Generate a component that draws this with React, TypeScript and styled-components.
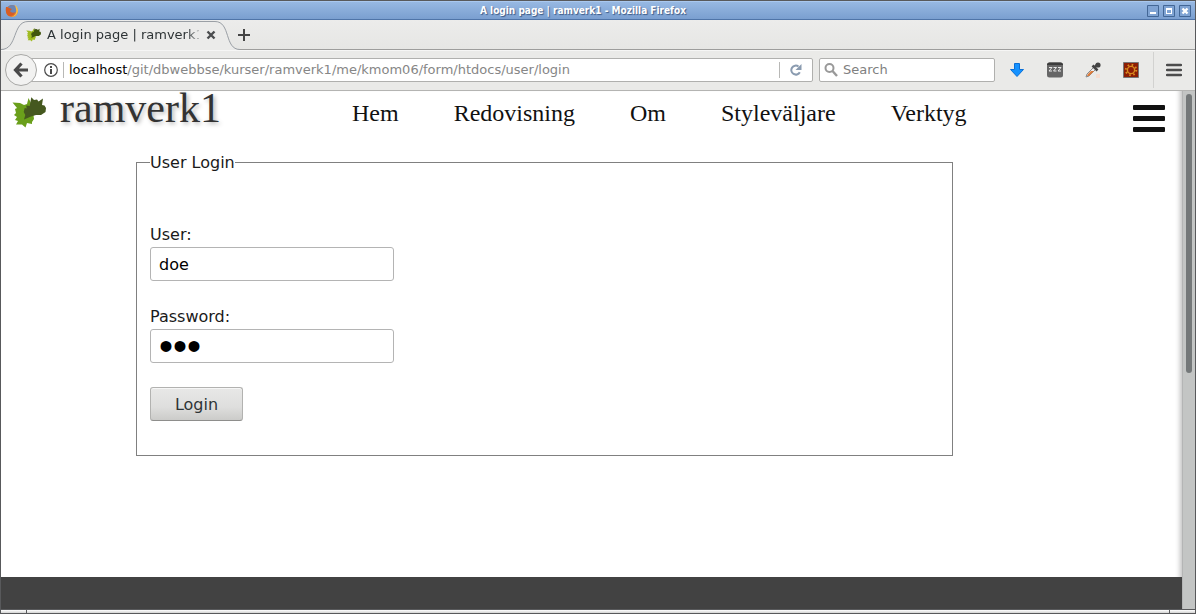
import React from "react";
import styled, { createGlobalStyle, css } from "styled-components";

const GlobalStyle = createGlobalStyle`
  *, *::before, *::after { box-sizing: border-box; }
  body { margin: 0; background: #e8e8e7; }
  button { margin: 0; padding: 0; border: 0; background: none; font: inherit; color: inherit; }
  svg { display: block; }
`;

const chromeFont = css`
  font-family: "DejaVu Sans", sans-serif;
  font-size: 13px;
  line-height: 20px;
`;

const Window = styled.div`
  display: flex;
  flex-direction: column;
  min-height: 100vh;
  border: 1px solid #58595b;
  background: #e8e8e7;
`;

const TitleBar = styled.div`
  display: grid;
  grid-template-columns: 30px 1fr 60px;
  align-items: center;
  height: 19px;
  padding: 0 4px;
  border-top: 1px solid #a9c8ef;
  border-bottom: 1px solid #4f74a8;
  background: linear-gradient(#97b8e2, #7a9fd0);
`;

const WindowTitle = styled.div`
  font-family: "DejaVu Sans Condensed", "DejaVu Sans", sans-serif;
  font-size: 10px;
  line-height: 16px;
  font-weight: bold;
  text-align: center;
  color: #fff;
  text-shadow: 1px 1px 1px #3c5a86;
`;

const WindowButtons = styled.div`
  display: flex;
  justify-content: flex-end;
  gap: 4px;
`;

const WindowButton = styled.button`
  width: 12px;
  height: 12px;
`;

const TabBar = styled.div`
  display: flex;
  height: 30px;
  border-bottom: 1px solid #9d9d9c;
  background: linear-gradient(#ececeb, #e6e6e4);
`;

const Tab = styled.div`
  position: relative;
  display: flex;
  align-items: center;
  width: 231px;
  height: 30px;
  padding-left: 25px;
`;

const TabShape = styled.svg`
  position: absolute;
  left: 0;
  top: 0;
`;

const TabTitle = styled.a`
  ${chromeFont}
  position: relative;
  width: 152px;
  margin-left: 6px;
  overflow: hidden;
  white-space: nowrap;
  text-decoration: none;
  color: #2e3436;
  mask-image: linear-gradient(90deg, #000 140px, transparent 156px);
`;

const TabIcon = styled.span`
  position: relative;
  flex: none;
`;

const IconButton = styled.button<{ $wide?: boolean }>`
  position: relative;
  display: flex;
  align-items: center;
  justify-content: center;
  flex: none;
  width: ${(p) => (p.$wide ? 32 : 24)}px;
  height: 30px;
`;

const NavBar = styled.div`
  display: flex;
  align-items: center;
  height: 41px;
  padding: 0 13px 2px 4px;
  border-top: 1px solid #f6f6f5;
  border-bottom: 1px solid #b4b4b2;
  background: #eaeae8;
`;

const BackButton = styled.button`
  z-index: 1;
  display: flex;
  align-items: center;
  justify-content: center;
  flex: none;
  width: 32px;
  height: 32px;
  border: 1px solid #a8a8a6;
  border-radius: 50%;
  background: #f2f2f1;
`;

const UrlBar = styled.div`
  display: flex;
  align-items: center;
  flex: 1;
  min-width: 0;
  height: 24px;
  margin-left: -7px;
  padding-left: 8px;
  border: 1px solid #b0b0ae;
  border-radius: 2px;
  background: #fff;
`;

const Divider = styled.span<{ $tall?: boolean }>`
  flex: none;
  width: 1px;
  height: ${(p) => (p.$tall ? 36 : 16)}px;
  background: ${(p) => (p.$tall ? "#d2d2d0" : "#b8b8b6")};
`;

const Url = styled.div`
  ${chromeFont}
  flex: 1;
  min-width: 0;
  overflow: hidden;
  white-space: nowrap;
  padding-left: 5px;
  color: #868686;
`;

const Host = styled.span`
  color: #000;
`;

const SearchBar = styled.label`
  display: flex;
  align-items: center;
  gap: 5px;
  width: 176px;
  height: 24px;
  margin-left: 6px;
  padding-left: 4px;
  border: 1px solid #b0b0ae;
  border-radius: 2px;
  background: #fff;
`;

const SearchInput = styled.input`
  ${chromeFont}
  flex: 1;
  min-width: 0;
  padding: 0;
  border: 0;
  outline: 0;
  background: none;
  &::placeholder { color: #808080; opacity: 1; }
`;

const Tools = styled.div<{ $tight?: boolean }>`
  display: flex;
  align-items: center;
  gap: ${(p) => (p.$tight ? 12 : 14)}px;
  margin-left: 10px;
`;

const Viewport = styled.div`
  display: flex;
  flex: 1;
`;

const Page = styled.div`
  display: flex;
  flex-direction: column;
  flex: 1;
  min-width: 0;
  background: #fff;
  box-shadow: inset -6px 0 5px -4px #00000040;
`;

const SiteHeader = styled.header`
  display: flex;
  align-items: flex-start;
  height: 50px;
  padding: 0 17px 0 11px;
`;

const Brand = styled.a`
  display: flex;
  align-items: flex-start;
  width: 340px;
  gap: 14px;
  text-decoration: none;
  color: #333;
  font-family: "Liberation Serif", serif;
  font-size: 42px;
  line-height: 34px;
  text-shadow: 2px 2px 4px #00000048;
`;

const BrandMark = styled.span`
  padding-top: 6px;
`;

const SiteNav = styled.nav`
  display: flex;
  flex: 1;
  gap: 55px;
`;

const NavLink = styled.a`
  font-family: "Liberation Serif", serif;
  font-size: 24px;
  line-height: 44px;
  text-decoration: none;
  color: #111;
`;

const MenuButton = styled.button`
  display: flex;
  flex-direction: column;
  gap: 6px;
  width: 32px;
  margin-top: 14px;
`;

const MenuBar = styled.span`
  width: 32px;
  height: 5px;
  border-radius: 1px;
  background: #111;
`;

const LoginForm = styled.form`
  flex: 1;
  margin: 11px 229px 0 135px;
  font-family: "DejaVu Sans", sans-serif;
  font-size: 16px;
  color: #1a1a1a;
`;

const Fieldset = styled.fieldset`
  display: flex;
  flex-direction: column;
  align-items: flex-start;
  gap: 24px;
  margin: 0;
  padding: 51px 13px 34px;
  border: 1px solid #808080;
`;

const Legend = styled.legend`
  padding: 2px 0 0;
  line-height: 18px;
`;

const Field = styled.label`
  display: flex;
  flex-direction: column;
  line-height: 24px;
`;

const TextInput = styled.input`
  width: 244px;
  height: 34px;
  padding: 0 8px;
  border: 1px solid #b4b4b4;
  border-radius: 3px;
  outline: 0;
  background: #fff;
  font-family: "DejaVu Sans", sans-serif;
  font-size: 16px;
  color: #000;
  &[type="password"] {
    font-family: "Liberation Sans", sans-serif;
    font-size: 40px;
  }
`;

const SubmitButton = styled.button`
  width: 93px;
  height: 34px;
  border: 1px solid #b2b2b0;
  border-bottom-color: #8e8e8c;
  border-radius: 3px;
  background: linear-gradient(#e8e8e7, #dededd 60%, #cbcbc9);
  box-shadow: inset 0 1px #f6f6f6;
  color: #2e3436;
`;

const SiteFooter = styled.footer`
  height: 32px;
  background: #424242;
`;

const ScrollTrack = styled.div`
  width: 13px;
  padding: 3px 3px 0;
  background: #c3c5c4;
  border-left: 1px solid #b4b5b5;
`;

const ScrollThumb = styled.div`
  width: 6px;
  height: 279px;
  border-radius: 3px;
  background: #747879;
`;

const ResizeBar = styled.div`
  display: grid;
  grid-template-columns: 25px 1fr 25px;
  gap: 1px;
  height: 4px;
  border-top: 1px solid #58595b;
  background: #58595b;
`;

const ResizeGrip = styled.span`
  background: linear-gradient(#fff, #d4d4d3);
`;

const Leaf = ({ size, light, dark }: { size: number; light: string; dark: string }) => (
  <svg width={size} height={size} viewBox="0 0 34 34">
    <path
      fill={light}
      d="M.5 5.500L8 6l4 2 3-1 1.500-6L20 8l2 14-2 3v2l-5-1-1.500 4.500L10 27.500H4L6 24l-3-1 2-3-3-2 2-2-1-4 2-1z"
    />
    <path
      fill={dark}
      d="M19.300.3L22 3l3-.5 1.500 2 4.500-3-1 6.500 2.500.5L34 11l-.5 4-4.500 3h-5l-5 1.500-7 3 1.300-4.500-1.600-3 1-4 2 .5-.5-3 3.500.5z"
    />
  </svg>
);

const navItems = ["Hem", "Redovisning", "Om", "Styleväljare", "Verktyg"];

export default function App() {
  return (
    <Window>
      <GlobalStyle />
      <TitleBar>
        <svg width="14" height="14" viewBox="0 0 14 14">
          <circle cx="7" cy="7" r="6" fill="#e5752a" />
          <circle cx="7" cy="5.500" r="4.500" fill="#6c86b5" />
          <path fill="#d85d24" d="M1 3c1 0 2 0 3 1l3 1-2 2c1 2 4 2 5 1-1 3-3 4-5 4C2 12 0 8 1 3z" />
          <path fill="#f7c04a" d="M10 1c3 2 4 6 2 9-1 2-3 3-6 3 4-1 6-4 5-8z" />
        </svg>
        <WindowTitle>A login page | ramverk1 - Mozilla Firefox</WindowTitle>
        <WindowButtons>
          {["Minimize", "Maximize", "Close"].map((name) => (
            <WindowButton key={name} type="button" aria-label={name}>
              <svg width="12" height="12" viewBox="0 0 12 12">
                <path d="M.5.5h11v11H.5z" fill="#7fa3d3" stroke="#436796" />
                {name === "Minimize" && <path d="M3 7h6v2H3z" fill="#fff" />}
                {name === "Maximize" && <path d="M3 3h6v6H3zM4 5v3h4V5z" fill="#fff" fillRule="evenodd" />}
                {name === "Close" && <path d="M3.500 3.500l5 5m0-5l-5 5" stroke="#fff" strokeWidth="2.400" />}
              </svg>
            </WindowButton>
          ))}
        </WindowButtons>
      </TitleBar>

      <TabBar>
        <Tab>
          <TabShape width="240" height="30" viewBox="0 0 240 30">
            <path d="M0 30v-.5C17 29.500 11 1.500 27 1.500H214C230 1.500 223 29.500 239 29.500V30z" fill="#ebebea" />
            <path d="M0 29.500C17 29.500 11 1.500 27 1.500H214C230 1.500 223 29.500 239 29.500" fill="none" stroke="#9a9fa5" />
          </TabShape>
          <TabIcon><Leaf size={15} light="#a0bb22" dark="#42560f" /></TabIcon>
          <TabTitle href="#">A login page | ramverk1</TabTitle>
          <IconButton type="button" aria-label="Close tab">
            <svg width="10" height="10" viewBox="0 0 10 10">
              <path d="M1.500 1.500l7 7m0-7l-7 7" stroke="#4b4d4f" strokeWidth="2.400" />
            </svg>
          </IconButton>
        </Tab>
        <IconButton type="button" aria-label="New tab">
          <svg width="12" height="12" viewBox="0 0 12 12">
            <path d="M6 0v12M0 6h12" stroke="#444" strokeWidth="2" />
          </svg>
        </IconButton>
      </TabBar>

      <NavBar>
        <BackButton type="button" aria-label="Back">
          <svg width="16" height="16" viewBox="0 0 16 16">
            <path d="M8.500 1.500L2.500 8l6 6.500M3 8h12" fill="none" stroke="#4a4a4a" strokeWidth="3.200" />
          </svg>
        </BackButton>
        <UrlBar>
          <IconButton type="button" aria-label="Site information">
            <svg width="14" height="14" viewBox="0 0 14 14">
              <circle cx="7" cy="7" r="6.300" fill="none" stroke="#4a4a4a" strokeWidth="1.200" />
              <path d="M6 3h2v2H6zM6 6h2v5H6z" fill="#4a4a4a" />
            </svg>
          </IconButton>
          <Divider />
          <Url><Host>localhost</Host>/git/dbwebbse/kurser/ramverk1/me/kmom06/form/htdocs/user/login</Url>
          <Divider />
          <IconButton type="button" aria-label="Reload" $wide>
            <svg width="12" height="12" viewBox="0 0 12 12">
              <path d="M9.800 8.200A4.500 4.500 0 1 1 8.500 2.500" fill="none" stroke="#8a9bb0" strokeWidth="2" />
              <path d="M11.500 0v6h-6z" fill="#8a9bb0" />
            </svg>
          </IconButton>
        </UrlBar>
        <SearchBar>
          <svg width="14" height="14" viewBox="0 0 14 14">
            <circle cx="5.500" cy="5" r="4" fill="none" stroke="#999" strokeWidth="2" />
            <path d="M8.500 8l4.500 5" stroke="#999" strokeWidth="2.400" />
          </svg>
          <SearchInput type="search" placeholder="Search" aria-label="Search" />
        </SearchBar>
        <Tools>
          <IconButton type="button" aria-label="Downloads">
            <svg width="14" height="14" viewBox="0 0 14 14">
              <path d="M4.500.5h5v6h4L7 13.500.5 6.500h4z" fill="#1592ff" stroke="#0a6fd6" />
            </svg>
          </IconButton>
          <IconButton type="button" aria-label="Suspend tab">
            <svg width="16" height="16" viewBox="0 0 16 16">
              <rect width="16" height="15" y=".5" rx="2.500" fill="#666" />
              <path d="M0 3a2.500 2.500 0 0 1 2.500-2.500h11A2.500 2.500 0 0 1 16 3z" fill="#3c3c3c" />
              <path d="M2 5.500h3l-3 3.500h3M6.500 5.500h3L6.500 9h3M11 5.500h3L11 9h3" fill="none" stroke="#e8e8e8" />
            </svg>
          </IconButton>
          <IconButton type="button" aria-label="Color picker">
            <svg width="16" height="16" viewBox="0 0 16 16">
              <path d="M11 12h4v4h-4z" fill="#f6ddd0" />
              <path d="M1 15l1-3 7-7 2 2-7 7z" fill="#eee" stroke="#8b8b8b" />
              <path d="M2 14l1-2 3-3h3l-5 5z" fill="#df7b38" />
              <path d="M7.500 3.500l5 5M10 5l3-3" stroke="#444" strokeWidth="2.600" />
              <circle cx="13" cy="3" r="2.600" fill="#444" />
            </svg>
          </IconButton>
          <IconButton type="button" aria-label="Developer tools">
            <svg width="16" height="16" viewBox="0 0 16 16">
              <path d="M.5.5h15v15H.5z" fill="#8c1d04" stroke="#777" />
              <circle cx="8" cy="8" r="3.600" fill="none" stroke="#d98a1f" strokeWidth="1.400" />
              <circle cx="8" cy="8" r="5.200" fill="none" stroke="#d98a1f" strokeWidth="2" strokeDasharray="1.600 2.484" />
            </svg>
          </IconButton>
        </Tools>
        <Tools $tight>
          <Divider $tall />
          <svg width="16" height="14" viewBox="0 0 16 14">
            <path d="M1 2h14M1 7h14M1 12h14" stroke="#4c4c4c" strokeWidth="2.400" strokeLinecap="round" />
          </svg>
        </Tools>
      </NavBar>

      <Viewport>
        <Page>
          <SiteHeader>
            <Brand href="#">
              <BrandMark><Leaf size={34} light="#6a9f1b" dark="#45581f" /></BrandMark>
              ramverk1
            </Brand>
            <SiteNav>
              {navItems.map((item) => <NavLink key={item} href="#">{item}</NavLink>)}
            </SiteNav>
            <MenuButton type="button" aria-label="Menu">
              <MenuBar /><MenuBar /><MenuBar />
            </MenuButton>
          </SiteHeader>
          <LoginForm onSubmit={(e) => e.preventDefault()}>
            <Fieldset>
              <Legend>User Login</Legend>
              <Field>User:<TextInput type="text" defaultValue="doe" /></Field>
              <Field>Password:<TextInput type="password" defaultValue="doe" /></Field>
              <SubmitButton type="submit">Login</SubmitButton>
            </Fieldset>
          </LoginForm>
          <SiteFooter />
        </Page>
        <ScrollTrack><ScrollThumb /></ScrollTrack>
      </Viewport>
      <ResizeBar><ResizeGrip /><ResizeGrip /><ResizeGrip /></ResizeBar>
    </Window>
  );
}
